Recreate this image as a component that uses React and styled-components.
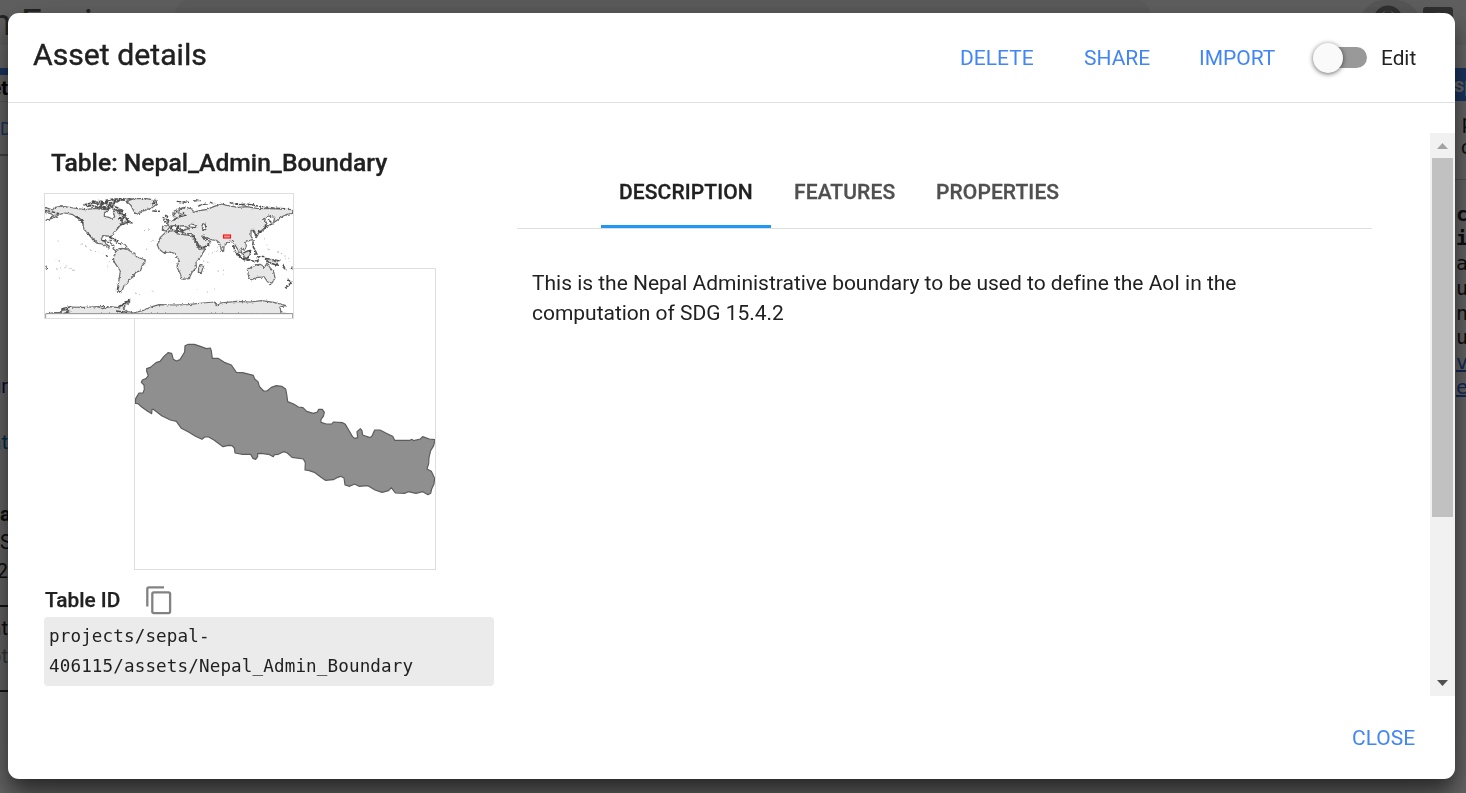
import React from "react";
import styled, { createGlobalStyle } from "styled-components";

const GlobalStyle = createGlobalStyle`
  *, *::before, *::after { box-sizing: border-box; }
  html, body { margin: 0; height: 100%; overflow: hidden; }
  body { font-family: Roboto, "Liberation Sans", sans-serif; font-size: 20px; color: #212121; }
`;

/* ---------- page behind the dialog ---------- */
const Page = styled.div`
  height: 793px;
  display: flex;
  flex-direction: column;
  background: #fff;
  overflow: hidden;
`;
const TopBar = styled.div`
  height: 45px;
  flex: none;
  display: flex;
  justify-content: space-between;
  background: #f0f0f0;
`;
const Brand = styled.div`
  width: 170px;
  margin-left: -9px;
  font-size: 37px;
  line-height: 46px;
  letter-spacing: 0.2px;
  white-space: nowrap;
  color: #5a5a5a;
`;
const SearchBox = styled.div`
  flex: 1;
  margin: 0 210px 0 14px;
  height: 40px;
  border-radius: 14px;
  background: #e4e4e4;
`;
const TopIcons = styled.div`
  width: 106px;
  svg { display: block; }
`;
const Columns = styled.div`
  flex: 1;
  display: flex;
  justify-content: space-between;
  padding-top: 23px;
`;
const Column = styled.div`
  width: ${(p) => p.$width}px;
  overflow: hidden;
`;
const Stripe = styled.div`
  height: ${(p) => p.$height}px;
  background: ${(p) => p.$color};
`;
const Fragment = styled.div`
  height: ${(p) => p.$height}px;
  padding-left: ${(p) => p.$indent || 0}px;
  display: flex;
  align-items: center;
  justify-content: ${(p) => (p.$end ? "flex-end" : "flex-start")};
  white-space: nowrap;
  font-family: ${(p) => (p.$mono ? '"DejaVu Sans Mono", monospace' : "Roboto, sans-serif")};
  font-size: ${(p) => p.$size || 20}px;
  font-weight: ${(p) => (p.$bold ? 700 : 400)};
  color: ${(p) => p.$color || "#222"};
  background: ${(p) => p.$bg || "transparent"};
  text-decoration: ${(p) => (p.$link ? "underline" : "none")};
`;

/* ---------- dialog ---------- */
const Overlay = styled.div`
  position: fixed;
  inset: 0;
  display: flex;
  padding: 13px 11px 14px 8px;
  background: rgba(0, 0, 0, 0.6);
`;
const Dialog = styled.section`
  flex: 1;
  display: flex;
  flex-direction: column;
  overflow: hidden;
  border-radius: 11px;
  background: #fff;
  box-shadow: 0 14px 19px -9px rgba(0, 0, 0, 0.2), 0 30px 48px 4px rgba(0, 0, 0, 0.14),
    0 11px 58px 10px rgba(0, 0, 0, 0.12), 0 12px 20px 0 rgba(0, 0, 0, 0.4);
`;
const Header = styled.header`
  height: 90px;
  flex: none;
  display: flex;
  justify-content: space-between;
  padding: 0 39px 0 25px;
  border-bottom: 1px solid #e0e0e0;
`;
const Title = styled.h1`
  margin: 0;
  font-size: 30.2px;
  font-weight: 400;
  line-height: 84px;
  -webkit-text-stroke: 0.4px #212121;
`;
const Actions = styled.div`
  display: flex;
  align-items: center;
`;
const TextButton = styled.button`
  width: ${(p) => p.$width}px;
  padding: 0;
  margin: 0 ${(p) => p.$gap || 0}px 0 0;
  border: 0;
  background: none;
  font: 400 21px/30px Roboto, sans-serif;
  color: #4285f4;
  text-align: left;
  white-space: nowrap;
`;
const Toggle = styled.span`
  width: 52px;
  height: 21px;
  margin-right: 14px;
  display: flex;
  align-items: center;
  border-radius: 11px;
  background: #999;
`;
const Knob = styled.span`
  width: 30px;
  height: 30px;
  flex: none;
  margin-left: -2px;
  border-radius: 50%;
  background: #fafafa;
  box-shadow: 0 1px 5px rgba(0, 0, 0, 0.6);
`;
const EditLabel = styled.span`
  width: 35px;
  font-size: 20.8px;
  line-height: 30px;
  white-space: nowrap;
`;
const Body = styled.div`
  height: 563px;
  margin-top: 30px;
  flex: none;
  display: flex;
`;
const AssetPane = styled.div`
  width: 450px;
  margin-left: 36px;
  display: flex;
  flex-direction: column;
`;
const AssetTitle = styled.h2`
  height: 60px;
  margin: 0 0 0 7px;
  font-size: 24.7px;
  font-weight: 500;
  line-height: 59px;
  white-space: nowrap;
  -webkit-text-stroke: 0.3px #212121;
`;
const MapStack = styled.div`
  height: 377px;
  display: grid;
  grid-template-columns: 90px 160px 142px;
  grid-template-rows: 75px 51px 251px;
`;
const MapFrame = styled.div`
  border: 1px solid #dedede;
  background: #fff;
  grid-area: ${(p) => p.$area};
  svg { display: block; width: 100%; height: 100%; }
`;
const IdRow = styled.div`
  height: 47px;
  display: flex;
  align-items: center;
  padding: 13px 0 0 1px;
  font-size: 20.8px;
  font-weight: 500;
  svg { margin-left: 23px; }
`;
const IdLabel = styled.span`
  width: 78px;
  white-space: nowrap;
  -webkit-text-stroke: 0.25px #212121;
`;
const IdBox = styled.code`
  height: 69px;
  padding: 4px 5px;
  border-radius: 4px;
  background: #ebebeb;
  font: 400 17.6px/30px "DejaVu Sans Mono", "Liberation Mono", monospace;
  letter-spacing: 0.12px;
`;
const DetailPane = styled.div`
  flex: 1;
  margin: 0 58px 0 23px;
`;
const Tabs = styled.nav`
  height: 96px;
  padding: 22px 0 0 84px;
  display: flex;
  border-bottom: 1px solid #dedede;
`;
const Tab = styled.span`
  width: ${(p) => p.$width}px;
  height: 73px;
  margin-right: ${(p) => p.$gap || 0}px;
  padding-left: 18px;
  font-size: 21px;
  font-weight: 500;
  line-height: 74px;
  letter-spacing: 0.1px;
  white-space: nowrap;
  color: ${(p) => (p.$active ? "#212121" : "#505050")};
  -webkit-text-stroke: 0.3px currentColor;
  border-bottom: ${(p) => (p.$active ? "3px solid #2196f3" : "0")};
`;
const Description = styled.p`
  width: 730px;
  margin: 39px 0 0 15px;
  font-size: 21px;
  line-height: 30px;
  letter-spacing: -0.02px;
`;
const Scrollbar = styled.div`
  width: 25px;
  padding: 10px 2px;
  display: flex;
  flex-direction: column;
  align-items: center;
  background: #f1f1f1;
  svg { display: block; flex: none; }
`;
const Thumb = styled.div`
  width: 21px;
  height: 359px;
  margin: 9px 0 auto;
  background: #c1c1c1;
`;
const Footer = styled.footer`
  flex: 1;
  display: flex;
  justify-content: flex-end;
  align-items: center;
  padding: 1px 40px 0 0;
`;

const WorldMap = () => (
  <svg viewBox="15 12 744 372" preserveAspectRatio="none">
    <defs>
      <filter id="rough" x="0" y="0" width="100%" height="100%">
        <feTurbulence type="fractalNoise" baseFrequency="0.16" numOctaves="2" seed="4" result="n" />
        <feDisplacementMap in="SourceGraphic" in2="n" scale="9" xChannelSelector="R" yChannelSelector="G" />
      </filter>
    </defs>
    <g filter="url(#rough)">
      <g fill="#e7e7e7" stroke="#6c6c6c" strokeWidth="3.6" strokeLinejoin="round">
        <path d="M15 52 L38 60 43 53 66 48 100 54 135 59 165 55 190 58 207 60 193 68 193 79 207 82 217 88 224 80 220 66 237 59 246 66 258 83 270 96 252 101 241 106 232 117 222 127 215 139 188 137 184 150 194 154 199 164 208 168 206 174 196 168 186 162 174 160 160 147 145 131 132 118 128 98 113 84 96 73 75 69 57 74 42 83 18 91 41 78 31 70 17 68 Z" />
        <path d="M208 151 L221 151 235 160 254 162 263 174 254 178 237 176 229 184 219 176 222 167 212 160 Z" fill="none" />
        <path d="M229 181 L246 175 262 178 281 190 291 201 316 210 314 219 306 228 302 241 287 247 279 260 267 270 263 279 252 287 246 303 237 306 232 298 237 270 241 243 232 230 222 215 220 202 Z" />
        <path d="M258 34 L284 25 320 26 348 31 350 42 337 53 315 61 303 65 297 73 286 70 278 57 272 45 Z" />
        <path d="M368 108 L386 107 381 96 399 92 408 83 399 76 399 65 415 57 436 51 458 58 460 67 479 62 502 58 521 50 545 42 567 48 595 52 620 50 650 55 682 56 716 57 758 59 758 70 741 73 730 78 713 89 701 98 704 82 684 78 671 88 681 99 675 114 658 126 649 143 644 124 633 121 633 139 640 148 625 153 617 157 619 168 613 181 602 174 605 191 597 185 584 163 574 150 563 158 552 168 551 184 544 180 538 158 529 151 517 150 500 143 489 138 502 151 512 154 507 166 489 173 481 173 462 140 456 131 435 130 422 125 434 119 450 116 430 107 417 109 406 107 396 107 388 113 380 123 367 121 Z" />
        <path d="M379 125 L407 121 412 132 433 134 455 138 462 150 474 171 477 178 496 176 483 199 468 214 469 232 456 247 447 266 426 268 421 251 411 232 417 211 406 191 390 186 370 188 357 177 352 164 361 142 Z" />
        <path d="M481 223 L491 227 484 248 475 247 476 235 Z" />
        <path d="M622 237 L639 229 650 224 663 223 673 232 681 219 690 233 701 246 705 264 696 279 683 276 673 261 652 262 634 269 626 263 Z" />
        <path d="M17 372 L43 368 64 368 66 355 91 351 132 352 177 350 188 356 210 350 235 353 249 344 262 334 272 334 257 346 250 354 260 363 280 369 307 362 337 350 357 344 404 345 444 344 488 339 523 336 531 347 541 339 590 334 630 336 665 332 701 337 721 342 738 347 720 351 723 369 758 372 Z" />
      </g>
      <g fill="none" stroke="#4e4e4e" strokeWidth="4" strokeLinejoin="round">
        <path d="M130 45 L160 38 184 44 196 40 211 45 225 40 M157 32 L169 37 182 33 195 38 210 29 230 33 253 28 M140 49 L155 46 172 52 188 47 203 55 221 48 238 56 M181 39 L199 36 210 39 233 35 240 30 M197 31 L221 27 245 28 277 26 M211 47 L229 63 248 61 237 70 258 74 246 80 265 89 M176 53 L207 58 M336 42 L350 35 M228 37 L217 44 210 55 201 46 M234 87 L248 85 244 96 262 98 277 98 M249 102 L236 103" strokeDasharray="11 2" strokeWidth="5" />
        <path d="M17 61 L38 66 56 70 44 76 M110 79 L126 90 130 105 M107 80 L121 86 131 101 M145 131 L156 146 165 156 M186 152 L199 153 207 160 M207 141 L225 148 236 157 M237 286 L232 303 247 309 M375 75 L383 79 379 88 387 93 372 96 M369 80 L373 91 M337 63 L358 64 M396 78 L414 63 432 53 M410 34 L430 36 447 37 M459 33 L482 32 M474 48 L492 43 508 41 M510 36 L527 45 M569 38 L594 44 621 42 643 45 M402 91 L412 83 427 78 431 68 424 74 415 68 M427 78 L443 74 M640 46 L668 50 700 54 735 56" strokeDasharray="14 3" />
        <path d="M446 107 L455 102 470 107 467 113 451 111 Z M488 101 L495 103 498 119 488 119 486 109 Z M412 110 L418 119 430 126 410 124 Z" fill="#fff" strokeWidth="3" />
        <path d="M391 107 L398 120 410 124 413 111 425 120 431 126 M653 125 L666 125 675 113 677 103 M640 118 L643 132 650 138 M684 88 L698 101 685 107 674 113 M640 151 L638 168 645 180 651 193 642 192 M579 165 L586 184 597 200 612 209 628 211 M592 190 L607 204 622 207 645 215 657 209 M650 205 L661 198 673 200 M705 210 L722 213 M728 222 L736 238" strokeDasharray="14 2" strokeWidth="4.5" />
        <path d="M609 190 L622 183 632 181 630 196 619 206 612 201 Z M676 205 L691 207 707 213 715 227 700 222 688 219 Z" fill="#e0e0e0" />
        <path d="M461 137 L468 154 478 172 M478 171 L491 172 507 163 M485 137 L492 147 504 148 M735 294 L747 286 753 276 743 269 M688 284 L694 281 M198 196 L203 200 M17 229 L20 239 M756 229 L754 238 M65 360 L82 359 89 365 70 371 M235 350 L259 338 270 328 M66 356 L94 350 M228 363 L262 367 M180 347 L195 351" />
      </g>
      <g fill="none" stroke="#a0a0a0" strokeWidth="2.4" strokeDasharray="4 9">
        <path d="M45 205 L68 221 90 235 111 246 M48 237 L70 232 93 236 M57 264 L60 265 M312 122 L328 119 M337 151 L350 154 M318 177 L326 181 M504 196 L531 181 537 160 M489 213 L510 219 M533 243 L539 244 M551 239 L552 255 M472 299 L474 302 M500 305 L511 312 M523 297 L531 301 M285 309 L308 316 M335 301 L339 307 M681 164 L685 177 682 187 M711 185 L730 193 749 207 M744 246 L753 254 M736 206 L748 214 M53 152 L62 159 M124 162 L144 173 M151 181 L190 190 M207 213 L203 230 M675 145 L669 151" />
      </g>
    </g>
    <path d="M17 384 V371 H758 V384" fill="none" stroke="#999" strokeWidth="3" />
    <rect x="550.5" y="135" width="21" height="9" fill="#f79a9a" stroke="#fb1515" strokeWidth="3.5" />
  </svg>
);

const NepalMap = () => (
  <svg viewBox="15 -198 900 900">
    <path
      fill="#8f8f8f"
      stroke="#5c5c5c"
      strokeWidth="3.5"
      strokeLinejoin="round"
      d="M16 205 L17 191 27 174 39 174 43 163 42 150 34 142 37 135 48 131 55 122 50 109 50 101 61 97 78 83 90 79 102 64 114 53 125 55 130 73 139 78 150 74 164 51 165 32 175 28 193 28 211 34 229 41 241 39 244 48 247 70 264 70 283 82 304 90 319 112 338 113 370 121 374 132 384 140 388 154 401 168 411 168 424 157 439 152 455 154 467 162 470 177 473 200 491 207 505 216 519 218 530 229 550 235 562 231 566 223 577 223 583 232 580 244 573 253 573 262 589 267 605 267 610 261 638 263 646 268 656 285 667 304 674 310 683 308 681 290 691 281 696 287 698 300 720 308 726 303 734 285 750 285 769 295 788 304 794 316 840 316 846 313 851 317 871 312 878 305 898 312 915 314 911 332 902 347 897 368 896 386 891 402 904 409 914 430 912 447 905 462 902 475 894 479 878 470 858 475 835 470 825 475 796 474 784 458 776 467 756 472 735 465 714 452 687 454 674 447 659 454 645 450 642 429 632 424 621 428 610 434 586 436 573 427 553 412 538 407 525 405 526 383 520 372 486 367 472 354 461 350 445 358 433 359 430 365 419 359 395 355 383 356 383 365 377 373 369 370 362 358 338 358 315 354 313 339 306 332 295 331 279 335 253 316 236 306 224 306 216 313 195 303 177 292 154 280 139 259 121 255 95 242 70 223 66 223 65 236 53 229 35 216 24 206 Z"
    />
  </svg>
);

const CopyIcon = () => (
  <svg width="26" height="29" viewBox="0 0 26 29" fill="none" stroke="#828282" strokeWidth="2.3">
    <path d="M1.3 20.5 V3 Q1.3 1.3 3 1.3 H18" />
    <rect x="6.3" y="6.4" width="17.8" height="20.8" rx="1.6" />
  </svg>
);

export default function App() {
  return (
    <>
      <GlobalStyle />
      <Page>
        <TopBar>
          <Brand>h Engine</Brand>
          <SearchBox />
          <TopIcons>
            <svg width="106" height="45" viewBox="0 0 106 45">
              <rect x="0" y="0" width="60" height="60" rx="24" fill="#dadada" />
              <circle cx="28" cy="20" r="12" fill="none" stroke="#7b7b7b" strokeWidth="5" />
              <circle cx="28" cy="15" r="4.5" fill="#7b7b7b" />
              <rect x="63" y="7" width="30" height="28" rx="3" fill="#777" />
              <circle cx="78" cy="16" r="4" fill="#a5a5a5" />
            </svg>
          </TopIcons>
        </TopBar>
        <Columns>
          <Column $width={8}>
            <Stripe $height={7} $color="#4285f4" />
            <Fragment $height={26} $bold $end $color="#000">et</Fragment>
            <Stripe $height={1} $color="#ddd" />
            <Fragment $height={52} $size={18} $color="#4285f4">D</Fragment>
            <Stripe $height={2} $color="#aaa" />
            <Fragment $height={216} />
            <Fragment $height={28} $end $color="#1a237e">ur</Fragment>
            <Fragment $height={28} />
            <Fragment $height={28} $end $color="#0277bd">at</Fragment>
            <Fragment $height={44} />
            <Fragment $height={28} $bold>ac</Fragment>
            <Fragment $height={28}>S</Fragment>
            <Fragment $height={30} $end>2</Fragment>
            <Fragment $height={19} />
            <Stripe $height={2} $color="#333" />
            <Fragment $height={8} />
            <Fragment $height={26} $end>at</Fragment>
            <Fragment $height={30} $end $color="#888">ot</Fragment>
            <Fragment $height={19} />
            <Stripe $height={2} $color="#333" />
          </Column>
          <Column $width={13}>
            <Fragment $height={33} $bold $indent={1} $bg="#4285f4" $color="#fff">sp</Fragment>
            <Fragment $height={8} />
            <Fragment $height={26} $indent={9} $color="#222">p</Fragment>
            <Fragment $height={24} $indent={8}>c</Fragment>
            <Fragment $height={20} />
            <Stripe $height={1} $color="#ccc" />
            <Fragment $height={22} />
            <Fragment $height={24} $mono $bold $indent={3}>c</Fragment>
            <Fragment $height={24} $mono $bold $indent={3}>i</Fragment>
            <Fragment $height={25} $mono $indent={3}>a</Fragment>
            <Fragment $height={25} $mono $indent={3}>u</Fragment>
            <Fragment $height={25} $mono $indent={3}>n</Fragment>
            <Fragment $height={24} $mono $indent={3}>u</Fragment>
            <Fragment $height={25} $mono $indent={3} $link $color="#3367d6">v</Fragment>
            <Fragment $height={25} $mono $indent={3} $link $color="#3367d6">e</Fragment>
          </Column>
        </Columns>
      </Page>
      <Overlay>
        <Dialog>
          <Header>
            <Title>Asset details</Title>
            <Actions>
              <TextButton $width={74} $gap={50}>DELETE</TextButton>
              <TextButton $width={66} $gap={49}>SHARE</TextButton>
              <TextButton $width={77} $gap={39}>IMPORT</TextButton>
              <Toggle>
                <Knob />
              </Toggle>
              <EditLabel>Edit</EditLabel>
            </Actions>
          </Header>
          <Body>
            <AssetPane>
              <AssetTitle>Table: Nepal_Admin_Boundary</AssetTitle>
              <MapStack>
                <MapFrame $area="2 / 2 / 4 / 4">
                  <NepalMap />
                </MapFrame>
                <MapFrame $area="1 / 1 / 3 / 3">
                  <WorldMap />
                </MapFrame>
              </MapStack>
              <IdRow>
                <IdLabel>Table ID</IdLabel>
                <CopyIcon />
              </IdRow>
              <IdBox>
                projects/sepal-
                <br />
                406115/assets/Nepal_Admin_Boundary
              </IdBox>
            </AssetPane>
            <DetailPane>
              <Tabs>
                <Tab $active $width={170} $gap={5}>DESCRIPTION</Tab>
                <Tab $width={142}>FEATURES</Tab>
                <Tab $width={160}>PROPERTIES</Tab>
              </Tabs>
              <Description>
                This is the Nepal Administrative boundary to be used to define the AoI in the
                computation of SDG 15.4.2
              </Description>
            </DetailPane>
            <Scrollbar>
              <svg width="11" height="6" viewBox="0 0 11 6">
                <path d="M0 6 L5.5 0 11 6 Z" fill="#a3a3a3" />
              </svg>
              <Thumb />
              <svg width="11" height="6" viewBox="0 0 11 6">
                <path d="M0 0 L5.5 6 11 0 Z" fill="#505050" />
              </svg>
            </Scrollbar>
          </Body>
          <Footer>
            <TextButton $width={63}>CLOSE</TextButton>
          </Footer>
        </Dialog>
      </Overlay>
    </>
  );
}
